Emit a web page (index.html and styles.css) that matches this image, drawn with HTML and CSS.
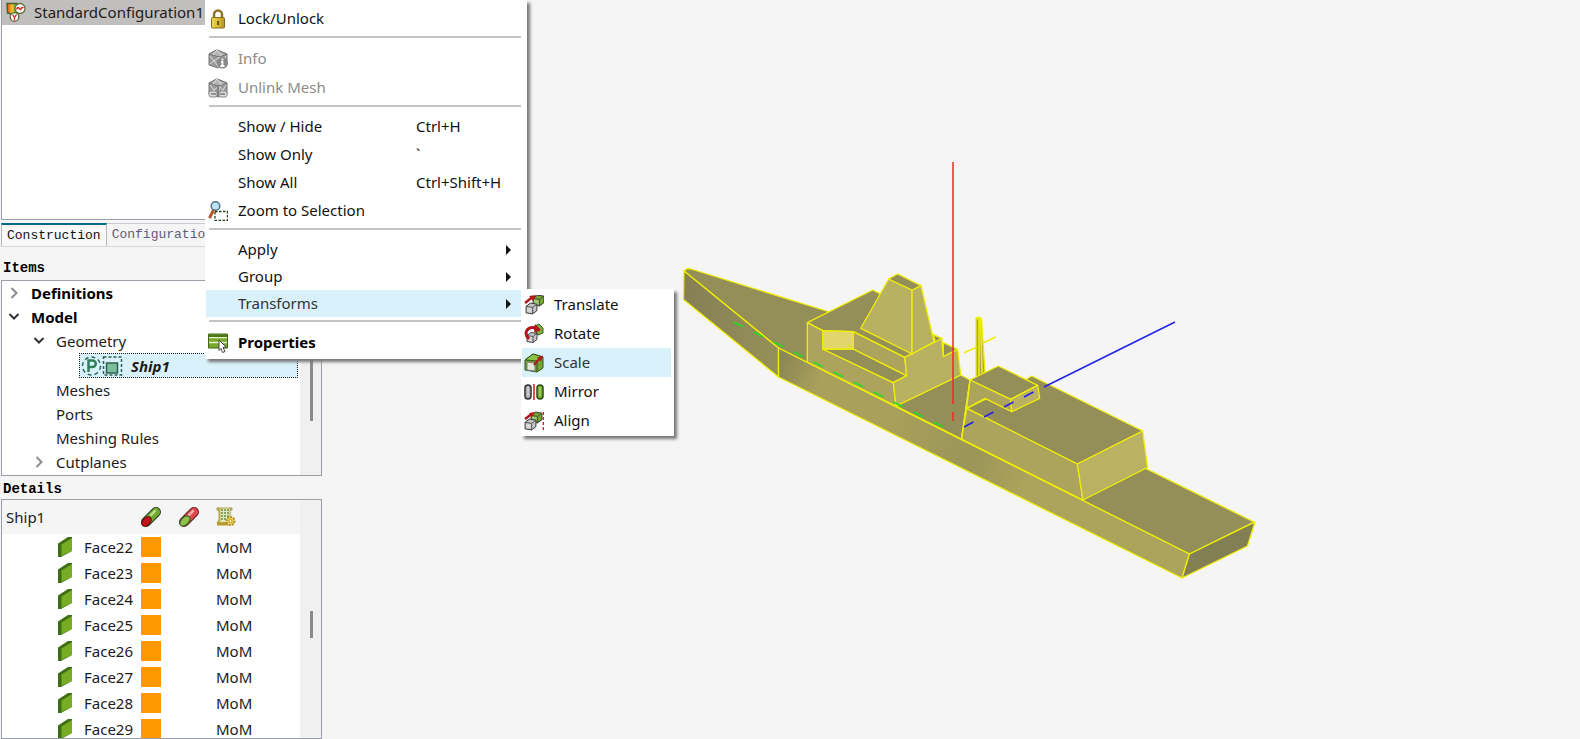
FILE: index.html
```html
<!DOCTYPE html>
<html lang="en">
<head>
<meta charset="utf-8">
<title>Ship1 - Construction</title>
<link rel="stylesheet" href="styles.css">
</head>
<body>
<svg class="defs" aria-hidden="true">
  <defs>
    <symbol id="i-face" viewBox="0 0 20 20"><path d="M1 6.500 11 0h4v14L4 20H1z" fill="#3c6e12"/><path d="M4.500 7.500 15 1v13L4.500 19z" fill="#79ac24"/></symbol>
    <symbol id="i-cube" viewBox="0 0 12 12"><path d="M1 4 5 1l6 1v6l-4 3-6-1z" fill="currentColor" stroke="#333" stroke-width=".9"/><path d="M1 4l6 1v6M7 5l4-3" fill="none" stroke="#444" stroke-width=".8"/><path d="M2 5l4 .7V10l-4-.7z" fill="#fff" opacity=".35"/></symbol>
    <symbol id="i-open" viewBox="0 0 14 14"><path d="M2.500 4 7 8.500 11.500 4" fill="none" stroke="#333" stroke-width="2"/></symbol>
    <symbol id="i-closed" viewBox="0 0 14 14"><path d="M4.500 2 9.500 7l-5 5" fill="none" stroke="#8c8c8c" stroke-width="2"/></symbol>
    <symbol id="i-mesh" viewBox="0 0 20 20"><path d="M1 5 9 1l10 4v11l-9 3-9-3z" fill="#9a9a9a" stroke="#777"/><path d="M1 5 9 1l10 4-8 3z" fill="#b4b4b4" stroke="#777"/><path d="M11 8v11M2 7l8 10M10 9 2 15M9 1l-4 5M9 1l5 6M12 9l6 7M18 7l-6 10" fill="none" stroke="#dedede"/></symbol>
    <linearGradient id="hull" gradientUnits="userSpaceOnUse" x1="778" y1="362" x2="1180" y2="562"><stop offset="0" stop-color="#8a8555"/><stop offset=".1" stop-color="#a8a05b"/><stop offset=".28" stop-color="#a8a05b"/><stop offset=".48" stop-color="#9b9558"/><stop offset=".62" stop-color="#aca45c"/></linearGradient>
    <linearGradient id="bow" x1="0" x2="1"><stop offset="0" stop-color="#858055"/><stop offset="1" stop-color="#959058"/></linearGradient>
    <linearGradient id="gold" x1="0" x2="1"><stop offset="0" stop-color="#f3dc55"/><stop offset="1" stop-color="#b8961d"/></linearGradient>
    <linearGradient id="heat" x1="0" x2="1"><stop offset="0" stop-color="#e0452c"/><stop offset=".5" stop-color="#f2c321"/><stop offset="1" stop-color="#3fa846"/></linearGradient>
  </defs>
</svg>
<div class="app">
  <aside class="sidebar">
    <section class="panel configs">
      <div class="config-row">
        <svg class="icon" viewBox="0 0 20 20"><path d="M1 1.500h10v9L8 13 1.500 11z" fill="url(#heat)" stroke="#46622f" stroke-width="1.500"/><circle cx="14" cy="6.500" r="5" fill="#fff" stroke="#56713a" stroke-width="1.300"/><path d="M10.500 7.500c2-5 3 1 4 0s1-3 3-1.500" fill="none" stroke="#d52a2a" stroke-width="1.500"/><circle cx="8.500" cy="15" r="4.300" fill="#fff" stroke="#56713a" stroke-width="1.300"/><path d="m6.500 12.500 2 3 2-3M8.500 15v3.500" fill="none" stroke="#d52a2a" stroke-width="1.300"/></svg>
        <span>StandardConfiguration1</span>
      </div>
    </section>
    <div class="tabs" role="tablist">
      <button class="tab active" role="tab" aria-selected="true">Construction</button>
      <button class="tab" role="tab" aria-selected="false">Configuration</button>
    </div>
    <h2 class="heading">Items</h2>
    <section class="panel items">
      <ul class="tree">
        <li class="node strong"><svg class="arrow"><use href="#i-closed"/></svg>Definitions</li>
        <li class="node strong"><svg class="arrow"><use href="#i-open"/></svg>Model</li>
        <li class="node child"><svg class="arrow"><use href="#i-open"/></svg>Geometry</li>
        <li class="node selected">
          <svg class="part-icon" viewBox="0 0 42 20"><circle cx="10.500" cy="10" r="9" fill="none" stroke="#2e6b5c" stroke-width="1.500" stroke-dasharray="4 3"/><path d="M7.500 16V4.500h4a3.200 3.200 0 0 1 0 6.500h-4" fill="none" stroke="#2e8157" stroke-width="2.500"/><path d="M22.500 1h18v18h-18z" fill="none" stroke="#2e5e50" stroke-width="1.500" stroke-dasharray="3 2"/><path d="M25.500 7h11v10h-11z" fill="#7cbd9d" stroke="#2c604e" stroke-width="1.500"/></svg>
          Ship1</li>
        <li class="node child leaf">Meshes</li>
        <li class="node child leaf">Ports</li>
        <li class="node child leaf">Meshing Rules</li>
        <li class="node child"><svg class="arrow"><use href="#i-closed"/></svg>Cutplanes</li>
      </ul>
      <div class="track"><div class="thumb items-thumb"></div></div>
    </section>
    <h2 class="heading">Details</h2>
    <section class="panel details">
      <div class="table-wrap">
      <table class="faces">
        <colgroup><col class="c-name"><col class="c-swatch"><col class="c-back"><col></colgroup>
        <thead><tr>
          <th scope="col">Ship1</th>
          <th scope="col"><svg class="icon" viewBox="0 0 20 20"><path d="M5 15 15 5" stroke="#28451a" stroke-width="10" stroke-linecap="round"/><path d="M6 14 15 5" stroke="#6fa82e" stroke-width="8" stroke-linecap="round"/><path d="m10 8 4-4" stroke="#b9dc8a" stroke-width="2.500" stroke-linecap="round"/><ellipse cx="5.500" cy="14.500" rx="5.500" ry="3.800" transform="rotate(-45 5.500 14.500)" fill="#c41318" stroke="#5d1010"/></svg></th>
          <th scope="col"><svg class="icon" viewBox="0 0 20 20"><path d="M5 15 15 5" stroke="#5f2020" stroke-width="10" stroke-linecap="round"/><path d="M5 15 15 5" stroke="#e0454b" stroke-width="8" stroke-linecap="round"/><path d="m10 8 4-4" stroke="#f7a9a7" stroke-width="2.500" stroke-linecap="round"/><ellipse cx="6" cy="14" rx="6" ry="3.800" transform="rotate(-45 6 14)" fill="#8cc34a" stroke="#3a5d1c"/></svg></th>
          <th scope="col"><svg class="icon" viewBox="0 0 20 20"><path d="M1 1h15v2h-2v13H1l2-3V3H1z" fill="#c9b95a" stroke="#a8993a"/><path d="M4.500 1.500h9V15h-9z" fill="#dfe9bb"/><path d="M5 3h8M5 6h8M5 9h8M5 12h7" stroke="#668c4c" stroke-dasharray="2 1" stroke-width="1.500"/><path d="M1 17h11" stroke="#b9982c" stroke-width="3"/><circle cx="14.500" cy="14" r="4" fill="#f0d85f" stroke="#b18d24" stroke-width="2" stroke-dasharray="2 1"/><circle cx="14.500" cy="14" r="1.500" fill="#fff" stroke="#b18d24"/></svg></th>
        </tr></thead>
        <tbody>
          <tr><td><span class="face"><svg class="icon"><use href="#i-face"/></svg>Face22</span></td><td><span class="swatch"></span></td><td></td><td>MoM</td></tr>
          <tr><td><span class="face"><svg class="icon"><use href="#i-face"/></svg>Face23</span></td><td><span class="swatch"></span></td><td></td><td>MoM</td></tr>
          <tr><td><span class="face"><svg class="icon"><use href="#i-face"/></svg>Face24</span></td><td><span class="swatch"></span></td><td></td><td>MoM</td></tr>
          <tr><td><span class="face"><svg class="icon"><use href="#i-face"/></svg>Face25</span></td><td><span class="swatch"></span></td><td></td><td>MoM</td></tr>
          <tr><td><span class="face"><svg class="icon"><use href="#i-face"/></svg>Face26</span></td><td><span class="swatch"></span></td><td></td><td>MoM</td></tr>
          <tr><td><span class="face"><svg class="icon"><use href="#i-face"/></svg>Face27</span></td><td><span class="swatch"></span></td><td></td><td>MoM</td></tr>
          <tr><td><span class="face"><svg class="icon"><use href="#i-face"/></svg>Face28</span></td><td><span class="swatch"></span></td><td></td><td>MoM</td></tr>
          <tr><td><span class="face"><svg class="icon"><use href="#i-face"/></svg>Face29</span></td><td><span class="swatch"></span></td><td></td><td>MoM</td></tr>
        </tbody>
      </table>
      </div>
      <div class="track"><div class="thumb details-thumb"></div></div>
    </section>
  </aside>
  <main class="viewport">
    <svg class="scene" viewBox="323 0 1257 739" role="img" aria-label="Ship model">
      <g stroke="#f0ee08" stroke-width="1.300" stroke-linejoin="round">
        <path d="M684 271 687 268.500 691 269 828 311.500 1254 522 1189.500 554 778.500 348z" fill="#948e59"/>
        <path d="M684 271 778.500 348V377L683.500 299.500z" fill="url(#bow)"/>
        <path d="M778.500 348 1189.500 554 1182 578 778.500 377z" fill="url(#hull)"/>
        <path d="M1189.500 554 1255 522 1247.500 546 1182 578z" fill="#827f55"/>
        <path d="M828 311.500 860 327 900 300 963 330V376L1026 400 1147 466V374L1040 300 900 220 828 240z" fill="#f5f5f5" stroke="none"/>
        <path d="M896 406 960.700 375 970 380 961.500 439z" fill="#948e59"/>
        <path d="M976 378V318.500L978 317l3.500 1.500 3.500 54z" fill="#a8a15b"/>
        <path d="M976 318.500h5.500M979 319v57M980.500 319l1.500 54M964 352.700 977 347M983 343 995.700 337" fill="none" stroke-width="1.600"/>
        <path d="M966.700 408.300 1026.700 379 1031.700 376 1142.700 431 1077.300 464z" fill="#948e59"/>
        <path d="M966.700 408.300 1077.300 464 1083 500 961.500 439z" fill="#aca45c"/>
        <path d="M1077.300 464 1142.700 431 1147.500 467.500 1083 500z" fill="#bab262"/>
        <path d="M970 380 998.300 366 1037.700 385.300 1010.700 399.300z" fill="#948e59"/>
        <path d="M970 380 1010.700 399.300 1011.700 411.700 985 398.300 966.700 408.300z" fill="#aca45c"/>
        <path d="M1010.700 399.300 1037.700 385.300 1039.700 398.300 1011.700 411.700z" fill="#bab262"/>
        <path d="M970 380 961.500 439" fill="none"/>
        <path d="M807.300 322.700 872.700 290 879.300 293.300 934 335 941.700 338.300 904.700 357.300 853.300 331.700 822.700 330.700z" fill="#948e59"/>
        <path d="M807.300 322.700 822.700 330.700V349L893.300 382.700 896 406 807.300 362z" fill="#aca45c"/>
        <path d="M822.700 349H853.300L906.700 375.700 893.300 382.700z" fill="#948e59"/>
        <path d="M853.300 331.700 904.700 357.300 906.700 375.700 853.300 349z" fill="#aca45c"/>
        <path d="M822.700 330.700 853.300 331.700V349H822.700z" fill="#e0d66b"/>
        <path d="M943.300 342.700 957.700 349.300 943.300 357z" fill="#948e59"/>
        <path d="M904.700 357.300 941.700 338.300 943.300 356.700 957.700 349.300 960.700 375 896 406 893.300 382.700 906.700 375.700z" fill="#b8b162"/>
        <path d="M888.700 279 912 290V354L860.700 328.300z" fill="#b8b162"/>
        <path d="M912 290 921 285.700 934 341.700 912 354z" fill="#b8b162"/>
        <path d="M888.700 279 897.700 274 921 285.700 912 290z" fill="#948e59"/>
        <path d="M934 335 941.700 338.300 935 342z" fill="#948e59"/>
      </g>
      <path class="axis-y" d="M733.500 322 933.500 422 943.500 427"/>
      <path class="axis-x" d="M953 162V404M953 412V421"/>
      <path class="axis-z" d="M964 427 973.500 422M984 417 993.500 412M1004 407 1013.500 402M1024 397 1033.500 392M1044 387 1175 322"/>
    </svg>
  </main>
</div>

<div class="menu context" role="menu">
  <button class="item tall" role="menuitem"><svg class="icon" viewBox="0 0 20 20"><path d="M6 9V5.500a4 4 0 0 1 8 0V9" fill="none" stroke="#8d7423" stroke-width="2.500"/><rect x="3.500" y="8.500" width="13" height="10.500" rx="1" fill="url(#gold)" stroke="#84691b"/><path d="M10 12v4" stroke="#6d5514" stroke-width="2"/></svg><span>Lock/Unlock</span></button>
  <hr>
  <button class="item tall" role="menuitem" disabled><svg class="icon" viewBox="0 0 20 20"><use href="#i-mesh"/><circle cx="14.500" cy="14" r="5.500" fill="#888"/><path d="M14.500 9.500v2M13 13h1.500v4M12.500 17h4" stroke="#fff" stroke-width="1.800" fill="none"/></svg><span>Info</span></button>
  <button class="item tall" role="menuitem" disabled><svg class="icon" viewBox="0 0 20 20"><use href="#i-mesh"/><rect x="1" y="13" width="8" height="6" rx="2" fill="#ddd" stroke="#888"/><rect x="11" y="13" width="8" height="6" rx="2" fill="#ddd" stroke="#888"/><path d="M3 16h5M12 16h5M10 7v12" stroke="#777" stroke-width="1.500"/></svg><span>Unlink Mesh</span></button>
  <hr>
  <button class="item" role="menuitem"><span>Show / Hide</span><kbd>Ctrl+H</kbd></button>
  <button class="item" role="menuitem"><span>Show Only</span><kbd>`</kbd></button>
  <button class="item" role="menuitem"><span>Show All</span><kbd>Ctrl+Shift+H</kbd></button>
  <button class="item" role="menuitem"><svg class="icon" viewBox="0 0 20 20"><path d="M5.500 9 2 16" stroke="#b35a2c" stroke-width="3" stroke-linecap="round"/><circle cx="7.500" cy="5" r="4.300" fill="#bfe3f5" stroke="#50758c" stroke-width="1.500"/><path d="M7 10.500h12.500v9H7z" fill="none" stroke="#243d12" stroke-width="1.300" stroke-dasharray="2.500 1.500"/></svg><span>Zoom to Selection</span></button>
  <hr>
  <button class="item sub" role="menuitem" aria-haspopup="menu"><span>Apply</span></button>
  <button class="item sub" role="menuitem" aria-haspopup="menu"><span>Group</span></button>
  <button class="item sub current" role="menuitem" aria-haspopup="menu" aria-expanded="true"><span>Transforms</span></button>
  <hr>
  <button class="item tall strong" role="menuitem"><svg class="icon" viewBox="0 0 20 20"><path d="M.5 1h19v14H.500z" fill="#7aa82e" stroke="#3f6616"/><path d="M1 4.500h18M1 9.500h18" stroke="#e4f2c5" stroke-width="1.300"/><path d="M1 3h18" stroke="#4c761a" stroke-width="2"/><path d="m11 7 7 7-3 .5 2 4-2.500 1-1.500-4-2 2z" fill="#fff" stroke="#444"/></svg><span>Properties</span></button>
</div>

<div class="menu transforms" role="menu">
  <button class="item tall" role="menuitem"><svg class="icon" viewBox="0 0 20 20"><use href="#i-cube" x="8" y="-1" width="13" height="13" color="#72aa2c"/><use href="#i-cube" x="1" y="7" width="13" height="13" color="#c4c4c4"/><path d="M1 8 8 2.500" stroke="#b3161b" stroke-width="2.500"/><path d="M5 1 12 0 9 6z" fill="#b3161b"/></svg><span>Translate</span></button>
  <button class="item tall" role="menuitem"><svg class="icon" viewBox="0 0 20 20"><path d="m9 3 6-3 4 4v5l-5 2z" fill="#80b13a" stroke="#3c5a20"/><use href="#i-cube" x="2" y="7" width="12" height="13" color="#c4c4c4"/><path d="M5 15C-1 9 3 2 12 4" fill="none" stroke="#b3161b" stroke-width="3"/><path d="m11 0 6 6-7 3z" fill="#b3161b"/></svg><span>Rotate</span></button>
  <button class="item tall current" role="menuitem"><svg class="icon" viewBox="0 0 20 20"><path d="M1 7 9 1l10 3v11l-6 4-12-2z" fill="#72a634" stroke="#36551c"/><path d="M1 7 9 1l10 3-6 4z" fill="#8cc046" stroke="#36551c"/><path d="M13 8v11" fill="none" stroke="#36551c"/><path d="m3 9 8 1v8l-8-1z" fill="#e5e8d8" stroke="#777"/><path d="m10 12 5-6" stroke="#b3161b" stroke-width="2"/><path d="m13 4.500 6-2-2 6z" fill="#b3161b"/></svg><span>Scale</span></button>
  <button class="item tall" role="menuitem"><svg class="icon" viewBox="0 0 20 20"><rect x="1" y="3" width="6" height="14" rx="3" fill="#aaa" stroke="#333" stroke-width="1.500"/><path d="M4 5v9" stroke="#eee"/><path d="M10 2v16" stroke="#c01e23" stroke-width="1.500"/><rect x="13" y="3" width="6" height="14" rx="3" fill="#73ad2c" stroke="#2f4b18" stroke-width="1.500"/><path d="M16 5v9" stroke="#c5e394"/></svg><span>Mirror</span></button>
  <button class="item tall" role="menuitem"><svg class="icon" viewBox="0 0 20 20"><use href="#i-cube" x="6" y="0" width="13" height="13" color="#72aa2c"/><use href="#i-cube" x="0" y="7" width="13" height="13" color="#c4c4c4"/><path d="M1 8 7 3.500" stroke="#b3161b" stroke-width="2.500"/><path d="M5 2 11 1 8 6z" fill="#b3161b"/><path d="M19.300 1v18" stroke="#c01e23" stroke-width="1.300" stroke-dasharray="3 2"/></svg><span>Align</span></button>
</div>
</body>
</html>
```
FILE: styles.css
```css
* { box-sizing: border-box; }
body {
  margin: 0;
  background: #f5f5f5;
  color: #1b1b1b;
  font: 15px/20px "Noto Sans", "Open Sans", sans-serif;
}
button { border: 0; background: none; font: inherit; color: inherit; padding: 0; }
.defs { position: absolute; width: 0; height: 0; }
.icon { display: block; width: 20px; height: 20px; flex: none; }

.app { display: flex; height: 100vh; overflow: hidden; }
.sidebar {
  flex: none;
  width: 323px;
  padding: 0 1px 0 1px;
  display: flex;
  flex-direction: column;
}
.viewport { flex: 1; min-width: 0; }
.scene { display: block; width: 100%; height: 100%; }

.panel { border: 1px solid #9b9ea8; background: #fff; display: flex; overflow: hidden; flex: none; }
.configs { height: 220px; border-top: 0; }
.config-row {
  flex: 1;
  height: 25px;
  display: flex;
  align-items: center;
  gap: 8px;
  padding: 0 0 1px 4px;
  background: #c1bfbd;
}

.tabs { display: flex; margin-top: 3px; height: 24px; border-bottom: 1px solid #d4d6d8; }
.tab {
  font: 13px/22px "Liberation Mono", monospace;
  padding: 0 5px;
  color: #5d5c78;
  border-top: 1px solid #c8cacc;
  border-right: 1px solid #b5b9be;
}
.tab.active { color: #111; border-top: 2px solid #00688b; border-left: 1px solid #b5b9be; background: #f8f8f8; }

.heading {
  margin: 0;
  height: 23px;
  padding-left: 2px;
  font: bold 14px/26px "Liberation Mono", monospace;
  color: #000;
}
.tabs + .heading { height: 33px; line-height: 42px; }

.tree { flex: 1; list-style: none; margin: 0; padding: 0 2px 0 0; }
.node { display: flex; align-items: center; height: 24px; padding: 0 0 1px 5px; gap: 10px; }
.node.strong { font-weight: bold; color: #000; }
.node.child { padding-left: 30px; }
.node.leaf { padding-left: 54px; }
.node.selected {
  height: 25px;
  margin-left: 77px;
  padding: 0 0 0 1px;
  gap: 8px;
  background: #d8f1fb;
  border: 1px dotted #222;
  font-weight: bold;
  font-style: italic;
}
.arrow { width: 14px; height: 14px; flex: none; }
.part-icon { width: 42px; height: 20px; flex: none; }
.items { height: 196px; }
.track { width: 21px; flex: none; background: #f0f0f0; }
.thumb { width: 3px; margin-left: 10px; background: #8a8a8a; }
.items-thumb { height: 140px; }
.details-thumb { height: 27px; margin-top: 111px; }

.details { flex: 1; min-height: 0; }
.table-wrap { flex: 1; overflow: hidden; }
.faces { width: 100%; border-collapse: collapse; table-layout: fixed; }
.faces th, .faces td { padding: 0; text-align: left; font-weight: normal; height: 26px; white-space: nowrap; }
.faces th { height: 34px; background: #f5f5f5; }
.faces th:first-child { padding-left: 4px; }
.c-name { width: 139px; }
.c-swatch { width: 38px; }
.c-back { width: 37px; }
.face { display: flex; align-items: center; gap: 7px; padding-left: 55px; }
.swatch { display: block; width: 20px; height: 20px; background: #ff9800; }

.menu { position: absolute; display: flex; flex-direction: column; background: #fff; color: #111; box-shadow: 3px 3px 3px #777; }
.context { left: 205px; top: 0; width: 322px; padding: 4px 6px 2px 1px; }
.transforms { left: 521px; top: 289px; width: 153px; padding: 1px 3px 1px 1px; }
.item {
  display: flex;
  align-items: center;
  flex: none;
  height: 28px;
  padding-left: 2px;
  text-align: left;
}
.item span, .item kbd { padding-bottom: 2px; }
.item span { flex: 1; }
.item .icon + span { margin-left: 10px; }
.item > span:first-child { margin-left: 30px; }
.item kbd { width: 105px; font: inherit; }
.item.tall { height: 29px; }
.item.sub { height: 27px; padding-right: 10px; }
.item.sub::after { content: ""; border: 5px solid transparent; border-left-color: #111; border-right: 0; }
.item.current { background: #d8f1fb; color: #333; }
.item:disabled { color: #8b8b8b; }
.item.strong { font-weight: bold; color: #000; }
.menu hr { margin: 3px 0 6px 3px; border: 0; border-top: 2px solid #c4c4c4; }

.axis-x, .axis-y, .axis-z { fill: none; stroke-width: 1.5; }
.axis-x { stroke: #f22; }
.axis-y { stroke: #20e020; stroke-dasharray: 11 11.36; }
.axis-z { stroke: #2222e8; }
```
